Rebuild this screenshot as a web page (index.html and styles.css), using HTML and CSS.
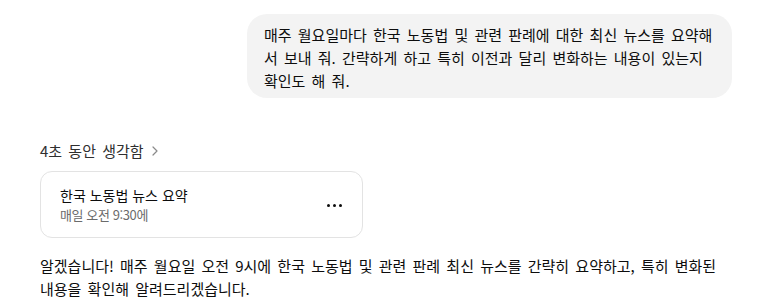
FILE: index.html
```html
<!DOCTYPE html>
<html lang="ko">
<head>
  <meta charset="UTF-8" />
  <meta name="viewport" content="width=device-width, initial-scale=1.0" />
  <title>대화</title>
  <link rel="stylesheet" href="styles.css">
</head>
<body>
  <main class="chat">
    <div class="user-row">
      <div class="user-bubble">매주 월요일마다 한국 노동법 및 관련 판례에 대한 최신 뉴스를 요약해서 보내 줘. 간략하게 하고 특히 이전과 달리 변화하는 내용이 있는지 확인도 해 줘.</div>
    </div>

    <div class="assistant">
      <div class="thought">
        <span>4초 동안 생각함</span>
        <svg class="chevron" width="8" height="12" viewBox="0 0 8 12" aria-hidden="true">
          <path d="M2 2 L6 6 L2 10" fill="none" stroke="#8a8a8a" stroke-width="1.2" stroke-linecap="round" stroke-linejoin="round"/>
        </svg>
      </div>

      <div class="task-card">
        <div class="task-info">
          <div class="task-title">한국 노동법 뉴스 요약</div>
          <div class="task-time">매일 오전 9:30에</div>
        </div>
        <button class="task-more" type="button" aria-label="더 보기">
          <span></span><span></span><span></span>
        </button>
      </div>

      <p class="answer">알겠습니다! 매주 월요일 오전 9시에 한국 노동법 및 관련 판례 최신 뉴스를 간략히 요약하고, 특히 변화된 내용을 확인해 알려드리겠습니다.</p>
    </div>
  </main>
</body>
</html>
```

FILE: styles.css
```css
* {
  box-sizing: border-box;
}

body {
  margin: 0;
  background-color: #fff;
  color: #0d0d0d;
  font-family: "Noto Sans CJK KR", "Noto Sans", sans-serif;
  font-size: 15px;
  word-spacing: 2px;
}

.chat {
  padding: 14px 28px 0 40px;
}

/* Mensagem do usuário, alinhada à direita */
.user-row {
  display: flex;
  justify-content: flex-end;
}

.user-bubble {
  width: 485px;
  background-color: #f3f3f3;
  border-radius: 20px;
  padding: 9px 13px 6px 17px;
  line-height: 23px;
}

/* Resposta do assistente */
.assistant {
  margin-top: 42px;
}

.thought {
  display: flex;
  align-items: center;
  gap: 7px;
  color: #2f2f2f;
  line-height: 22px;
}

.chevron {
  display: block;
}

.task-card {
  width: 323px;
  margin-top: 9px;
  border: 1px solid #e3e3e3;
  border-radius: 12px;
  padding: 14px 19px 12px 19px;
  display: flex;
  align-items: center;
  justify-content: space-between;
}

.task-title {
  font-size: 14px;
  line-height: 19px;
  word-spacing: 0;
  color: #0d0d0d;
}

.task-time {
  font-size: 13px;
  line-height: 20px;
  word-spacing: 0;
  letter-spacing: -0.4px;
  color: #6b6b6b;
}

.task-more {
  display: flex;
  gap: 3px;
  padding: 0;
  border: none;
  background: none;
  margin-right: 1px;
}

.task-more span {
  width: 3px;
  height: 3px;
  border-radius: 50%;
  background-color: #0d0d0d;
}

.answer {
  margin: 16px 0 0;
  line-height: 23px;
}
```
